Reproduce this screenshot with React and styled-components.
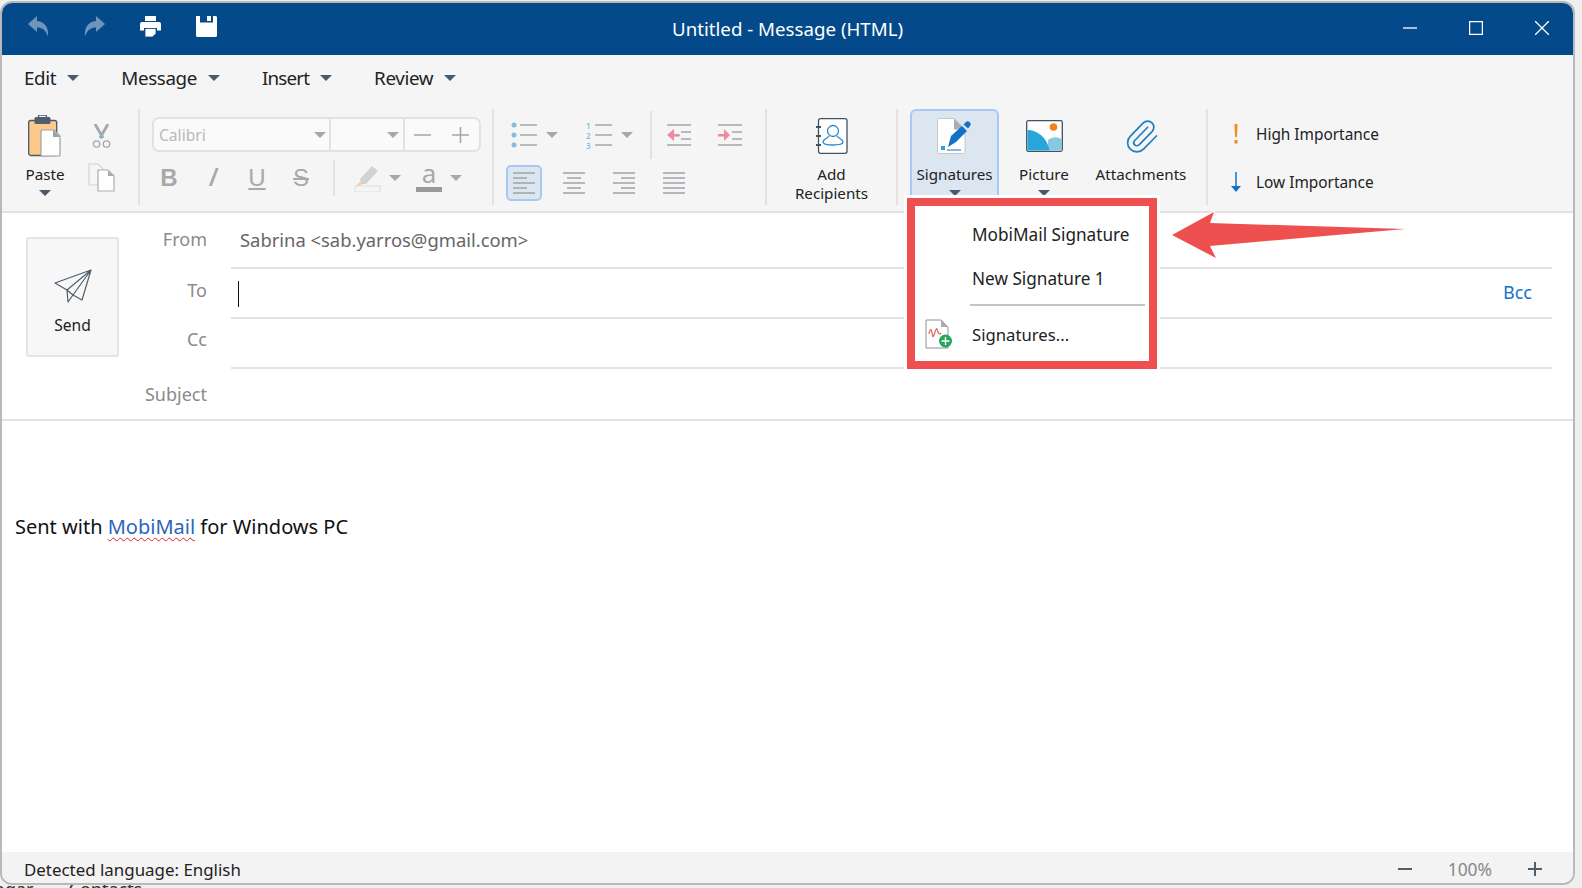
import React from 'react';
import styled, { createGlobalStyle } from 'styled-components';
import { Paperclip } from 'lucide-react';

const GlobalStyle = createGlobalStyle`
	html, body {
		margin: 0;
		padding: 0;
		height: 100%;
		background: #efefef;
		overflow: hidden;
	}
	body {
		font-family: 'Noto Sans', 'Open Sans', sans-serif;
		color: #1c1c1c;
	}
`;

const Page = styled.div`
	width: 1582px;
	height: 888px;
	padding: 3px 9px 0 2px;
	box-sizing: border-box;
	display: flex;
	flex-direction: column;
`;

const Window = styled.div`
	position: relative;
	height: 880px;
	flex: none;
	display: flex;
	flex-direction: column;
	background: #fff;
	border-radius: 10px;
	box-shadow: 0 0 0 2px #b9b9b9;
`;

const TitleBar = styled.header`
	height: 52px;
	flex: none;
	display: flex;
	align-items: center;
	background: #044a8a;
	border-radius: 10px 10px 0 0;
	position: relative;
`;

const QuickActions = styled.div`
	display: flex;
	padding-left: 26px;
	gap: 35px;
	margin-top: -5px;
	flex: 1;
`;

const QuickIcon = styled.svg`
	width: 21px;
	height: 21px;
	display: block;
`;

const Title = styled.h1`
	margin: 0;
	font-size: 18.7px;
	font-weight: 400;
	color: #fff;
	white-space: nowrap;
	position: absolute;
	left: 670px;
	top: 13px;
`;

const WindowControls = styled.div`
	display: flex;
	padding-right: 24px;
	gap: 52px;
	margin-top: -3px;
`;

const ControlIcon = styled.svg`
	width: 14px;
	height: 14px;
	display: block;
	stroke: #fff;
	fill: none;
`;

const MenuBar = styled.nav`
	height: 45px;
	flex: none;
	display: flex;
	align-items: center;
	gap: 42px;
	padding-left: 22px;
	background: #f5f5f5;
`;

const MenuItem = styled.div`
	display: flex;
	align-items: center;
	gap: 11px;
	font-size: 18.8px;
	letter-spacing: ${(p) => p.$spacing}px;
	line-height: 24px;
	color: #222;
`;

const Caret = styled.span`
	display: block;
	flex: none;
	width: 0;
	height: 0;
	border-left: 6px solid transparent;
	border-right: 6px solid transparent;
	border-top: 6px solid ${(p) => p.$color || '#4a5a6a'};
`;

const Ribbon = styled.div`
	height: 111px;
	flex: none;
	box-sizing: border-box;
	padding-top: 9px;
	display: flex;
	align-items: flex-start;
	background: #f5f5f5;
`;

const Sep = styled.div`
	width: 2px;
	height: 96px;
	flex: none;
	background: #e2e2e2;
`;

const RibbonRule = styled.div`
	height: 2px;
	flex: none;
	background: #e2e2e2;
`;

const ClipboardGroup = styled.div`
	width: 136px;
	flex: none;
	display: flex;
`;

const PasteButton = styled.div`
	width: 86px;
	display: flex;
	flex-direction: column;
	align-items: center;
	padding-top: 6px;
	box-sizing: border-box;
`;

const ClipTools = styled.div`
	width: 28px;
	display: flex;
	flex-direction: column;
	align-items: center;
	padding-top: 15px;
	gap: 15px;
	margin-left: -1px;
`;

const Label = styled.div`
	font-size: 15.2px;
	line-height: 19px;
	color: #222;
	text-align: center;
	white-space: nowrap;
`;

const PasteLabel = styled(Label)`
	margin-top: 8px;
`;

const FormatGroup = styled.div`
	width: 352px;
	flex: none;
	display: flex;
	flex-direction: column;
	padding-top: 8px;
	gap: 8px;
`;

const FontBox = styled.div`
	width: 329px;
	height: 35px;
	margin-left: 12px;
	box-sizing: border-box;
	display: flex;
	align-items: center;
	border: 2px solid #e2e2e2;
	border-radius: 7px;
	background: #fafafa;
`;

const FontCell = styled.div`
	width: ${(p) => p.$w}px;
	height: 100%;
	flex: none;
	box-sizing: border-box;
	display: flex;
	align-items: center;
	justify-content: space-between;
	padding: 0 ${(p) => p.$pr || 0}px 0 ${(p) => p.$pl || 0}px;
	border-right: ${(p) => (p.$last ? 'none' : '2px solid #e2e2e2')};
	font-size: 15.6px;
	color: #b9b9b9;
`;

const FormatRow = styled.div`
	height: 36px;
	display: flex;
	align-items: center;
	padding-left: 7px;
`;

const Slot = styled.div`
	width: ${(p) => p.$w}px;
	height: 36px;
	flex: none;
	display: flex;
	align-items: center;
	justify-content: center;
	gap: ${(p) => p.$gap || 0}px;
`;

const Glyph = styled.span`
	font-family: 'Liberation Sans', sans-serif;
	font-size: ${(p) => p.$size || 24}px;
	font-weight: ${(p) => p.$weight || 400};
	font-style: ${(p) => (p.$italic ? 'italic' : 'normal')};
	text-decoration: ${(p) => p.$deco || 'none'};
	text-decoration-thickness: 2px;
	text-underline-offset: 2px;
	color: #a6a9ac;
	line-height: 24px;
`;

const SmallSep = styled.div`
	width: 2px;
	height: ${(p) => p.$h || 36}px;
	flex: none;
	background: #e2e2e2;
	margin: 0 ${(p) => p.$right || 0}px 0 ${(p) => p.$left || 0}px;
`;

const ListGroup = styled.div`
	width: 271px;
	flex: none;
	display: flex;
	flex-direction: column;
	padding-top: 2px;
	gap: 6px;
`;

const ListRow = styled.div`
	height: 48px;
	display: flex;
	align-items: center;
`;

const AlignRow = styled.div`
	height: 36px;
	display: flex;
	align-items: center;
	padding-left: 12px;
`;

const AlignButton = styled.div`
	width: 36px;
	height: 36px;
	box-sizing: border-box;
	display: flex;
	align-items: center;
	justify-content: center;
	flex: none;
	margin-right: ${(p) => p.$mr || 0}px;
	border-radius: 5px;
	border: 2px solid ${(p) => (p.$active ? '#a9c9f5' : 'transparent')};
	background: ${(p) => (p.$active ? '#dce6f0' : 'transparent')};
`;

const ToolButton = styled.div`
	width: ${(p) => p.$w}px;
	height: 87px;
	flex: none;
	box-sizing: border-box;
	padding-top: 7px;
	display: flex;
	flex-direction: column;
	align-items: center;
	border-radius: 6px 6px 0 0;
	border: 2px solid ${(p) => (p.$active ? '#a9c9f5' : 'transparent')};
	border-bottom: none;
	background: ${(p) => (p.$active ? '#dce6f0' : 'transparent')};
`;

const IconBox = styled.div`
	height: 36px;
	margin-bottom: 11px;
	display: flex;
	align-items: center;
	justify-content: center;
	flex: none;
`;

const ToolCaret = styled(Caret)`
	margin-top: 6px;
`;

const MediaGroup = styled.div`
	width: 308px;
	flex: none;
	display: flex;
	padding-left: 12px;
	box-sizing: border-box;
`;

const ImportanceGroup = styled.div`
	display: flex;
	flex-direction: column;
	padding: 1px 0 0 20px;
`;

const ImportanceRow = styled.div`
	height: 48px;
	display: flex;
	align-items: center;
	gap: 12px;
	font-size: 15.4px;
	color: #222;
`;

const ImportanceIcon = styled.svg`
	width: 16px;
	height: 22px;
	flex: none;
`;

const ComposeHead = styled.section`
	height: 208px;
	flex: none;
	display: flex;
	box-sizing: border-box;
	border-bottom: 2px solid #e2e2e2;
`;

const SendColumn = styled.div`
	width: 118px;
	flex: none;
	padding: 24px 0 0 24px;
	box-sizing: border-box;
`;

const SendButton = styled.button`
	width: 93px;
	height: 120px;
	box-sizing: border-box;
	display: flex;
	flex-direction: column;
	align-items: center;
	padding: 30px 0 0;
	gap: 12px;
	font-family: inherit;
	font-size: 15.6px;
	line-height: 20px;
	color: #222;
	background: #f7f7f7;
	border: 2px solid #e4e4e4;
	border-radius: 3px;
`;

const Fields = styled.div`
	flex: 1;
	padding: 6px 21px 0 0;
	display: flex;
	flex-direction: column;
`;

const FieldRow = styled.div`
	height: 50px;
	display: grid;
	grid-template-columns: 87px 1fr;
	column-gap: 24px;
	flex: none;
`;

const FieldLabel = styled.div`
	text-align: right;
	font-size: 18px;
	line-height: 24px;
	color: #8a8a8a;
	padding-top: ${(p) => p.$pt || 8}px;
`;

const FieldValue = styled.div`
	display: flex;
	align-items: center;
	justify-content: space-between;
	padding: 0 20px 8px 9px;
	border-bottom: ${(p) => (p.$plain ? 'none' : '2px solid #e2e2e2')};
	font-size: 18.4px;
	color: #666;
`;

const TextCaret = styled.span`
	display: block;
	width: 1px;
	height: 26px;
	background: #111;
	margin: 9px 0 0 -2px;
`;

const BccLink = styled.span`
	font-size: 18px;
	color: #1273c4;
	margin-top: 6px;
`;

const Body = styled.main`
	flex: 1;
	padding: 94px 13px 0;
	font-size: 20px;
	line-height: 24px;
	color: #111;
`;

const MobiLink = styled.span`
	color: #2a66bd;
	text-decoration: underline wavy #e3202c 1px;
	text-underline-offset: 3px;
`;

const StatusBar = styled.footer`
	height: 31px;
	flex: none;
	box-sizing: border-box;
	display: flex;
	align-items: center;
	justify-content: space-between;
	padding: 3px 31px 0 22px;
	background: #f3f3f3;
	border-radius: 0 0 10px 10px;
	font-size: 16.9px;
	color: #222;
`;

const Zoom = styled.div`
	display: flex;
	align-items: center;
	gap: 36px;
	font-size: 17.4px;
	color: #888;
`;

const ZoomSign = styled.svg`
	width: 14px;
	height: 14px;
	stroke: #4f5f70;
	stroke-width: 2;
`;

const Dropdown = styled.div`
	position: absolute;
	left: 905px;
	top: 195px;
	width: 250px;
	box-sizing: border-box;
	background: #fff;
	border: 8px solid #ee5050;
	box-shadow: 0 0 0 3px #fff;
	padding: 6px 0 3px;
`;

const DropItem = styled.div`
	height: ${(p) => p.$h || 44}px;
	display: flex;
	align-items: center;
	font-size: ${(p) => p.$size || 17.2}px;
	color: #222;
	padding-left: ${(p) => p.$pl || 57}px;
`;

const DropRule = styled.div`
	height: 2px;
	margin: 4px 4px 4px 55px;
	background: #c4c4c4;
`;

const DropIcon = styled.svg`
	width: 28px;
	height: 30px;
	margin-right: 19px;
	flex: none;
`;

const PointerArrow = styled.svg`
	position: absolute;
	left: 1169px;
	top: 207px;
	width: 238px;
	height: 54px;
	overflow: visible;
`;

const BehindStrip = styled.div`
	height: 5px;
	overflow: hidden;
	display: flex;
	gap: 35px;
	font-size: 18px;
	line-height: 12px;
	color: #333;
	margin-left: -8px;
	flex: none;
`;

const PaperClipIcon = styled(Paperclip)`
	width: 37px;
	height: 37px;
	color: #1e7fc4;
	display: block;
`;

const menus = [
	{ name: 'Edit', spacing: -0.35 },
	{ name: 'Message', spacing: -0.35 },
	{ name: 'Insert', spacing: -0.85 },
	{ name: 'Review', spacing: -0.35 },
];

const Line = ({ d, color = '#a3a7ab', w = 1.5 }) => <path d={d} stroke={color} strokeWidth={w} fill='none' />;

const AlignIcon = ({ rows }) => (
	<svg width='24' height='24' viewBox='0 0 24 24'>
		{rows.map((r, i) => (
			<Line key={i} d={`M${r[0]} ${2 + i * 5}H${r[1]}`} color='#9ea3a8' />
		))}
	</svg>
);

function App() {
	return (
		<Page>
			<GlobalStyle />
			<Window>
				<TitleBar>
					<QuickActions>
						<QuickIcon viewBox='0 0 21 21' fill='#6e94bb'>
							<path d='M9 0 0 8 9 16v-4.600c5 0 8.500 2 11 9 1-8-3-15-11-15.400z' />
						</QuickIcon>
						<QuickIcon viewBox='0 0 21 21' fill='#6e94bb'>
							<path d='M12 0l9 8-9 8v-4.600c-5 0-8.500 2-11 9-1-8 3-15 11-15.400z' />
						</QuickIcon>
						<QuickIcon viewBox='0 0 21 21'>
							<path fill='#fff' d='M5 0h11v5H5zM2 6h17a2 2 0 0 1 2 2v6.500h-4V12H4v2.500H0V8a2 2 0 0 1 2-2z' />
							<path fill='#fff' stroke='#044a8a' strokeWidth='.8' d='M5 12.500h11v5l-3.500 3.500H5z' />
						</QuickIcon>
						<QuickIcon viewBox='0 0 21 21' fill='#fff'>
							<path fillRule='evenodd' d='M0 0h4v6.500h13V0h3l1 1v19l-1 1H1l-1-1zM11 0h4v5h-4z' />
						</QuickIcon>
					</QuickActions>
					<Title>Untitled - Message (HTML)</Title>
					<WindowControls>
						<ControlIcon viewBox='0 0 14 14'>
							<path d='M0 7h14' strokeWidth='1.3' />
						</ControlIcon>
						<ControlIcon viewBox='0 0 14 14'>
							<rect x='.6' y='.6' width='12.800' height='12.800' strokeWidth='1.3' />
						</ControlIcon>
						<ControlIcon viewBox='0 0 14 14'>
							<path d='M0 0l14 14M14 0L0 14' strokeWidth='1.3' />
						</ControlIcon>
					</WindowControls>
				</TitleBar>

				<MenuBar>
					{menus.map((m) => (
						<MenuItem key={m.name} $spacing={m.spacing}>
							{m.name}
							<Caret />
						</MenuItem>
					))}
				</MenuBar>

				<Ribbon>
					<ClipboardGroup>
						<PasteButton>
							<svg width='34' height='42' viewBox='0 0 34 42'>
								<rect x='.7' y='5.500' width='28' height='35' rx='2' fill='#fcc98a' stroke='#4a5a6a' strokeWidth='1.300' />
								<rect x='6.500' y='2' width='16' height='7' rx='1.500' fill='#4f5f70' />
								<rect x='10.500' y='0' width='8' height='5' rx='1.500' fill='none' stroke='#4f5f70' strokeWidth='1.300' />
								<path d='M14 15h12l6 6v19a1 1 0 0 1-1 1H14a1 1 0 0 1-1-1V16a1 1 0 0 1 1-1z' fill='#fff' stroke='#9ba0a5' strokeWidth='1.200' />
								<path d='M25 15l7 7h-7z' fill='#9ba0a5' />
							</svg>
							<PasteLabel>Paste</PasteLabel>
							<ToolCaret />
						</PasteButton>
						<ClipTools>
							<svg width='19' height='24' viewBox='0 0 19 24'>
								<path d='M3 0l8 14M16 0 8 14' stroke='#a3a7ab' strokeWidth='2.800' fill='none' />
								<circle cx='9.500' cy='11' r='1.800' fill='#7fb7d8' />
								<circle cx='4.500' cy='20' r='3.200' fill='none' stroke='#a3a7ab' strokeWidth='1.300' />
								<circle cx='14.500' cy='20' r='3.200' fill='none' stroke='#a3a7ab' strokeWidth='1.300' />
							</svg>
							<svg width='27' height='29' viewBox='0 0 27 29'>
								<path d='M1 1h9l5 5v16H1z' fill='#f5f5f5' stroke='#d2d4d6' strokeWidth='1.200' />
								<path d='M10 7h10l6 6v15H10z' fill='#fff' stroke='#a9adb1' strokeWidth='1.200' />
								<path d='M20 7l6 6h-6z' fill='#a9adb1' />
							</svg>
						</ClipTools>
					</ClipboardGroup>
					<Sep />

					<FormatGroup>
						<FontBox>
							<FontCell $w={177} $pl={5} $pr={3}>
								Calibri
								<Caret $color='#a6a9ac' />
							</FontCell>
							<FontCell $w={74} $pl={56} $pr={3}>
								<Caret $color='#a6a9ac' />
							</FontCell>
							<FontCell $w={74} $pl={9} $pr={9} $last>
								<svg width='56' height='16' viewBox='0 0 56 16'>
									<Line d='M0 8h17M38 8h17M46.500 0v16' w={1.600} color='#a3a7ab' />
								</svg>
							</FontCell>
						</FontBox>
						<FormatRow>
							<Slot $w={44}>
								<Glyph $weight={700}>B</Glyph>
							</Slot>
							<Slot $w={44}>
								<Glyph $italic $weight={700}>/</Glyph>
							</Slot>
							<Slot $w={44}>
								<Glyph $deco='underline'>U</Glyph>
							</Slot>
							<Slot $w={44}>
								<Glyph $deco='line-through'>S</Glyph>
							</Slot>
							<SmallSep $left={10} $right={16} />
							<Slot $w={52} $gap={7}>
								<svg width='28' height='28' viewBox='0 0 28 28'>
									<path d='M6 15 18 2l6 5-12 13H7z' fill='#d0d2d4' />
									<path d='M2 22l4-4 2 3z' fill='#fcc98a' />
									<rect x='1' y='22' width='25' height='6' fill='#f5f5f5' stroke='#dedede' />
								</svg>
								<Caret $color='#a6a9ac' />
							</Slot>
							<Slot $w={72} $gap={8}>
								<svg width='26' height='30' viewBox='0 0 26 30'>
									<text x='13' y='20' textAnchor='middle' fontFamily='Noto Sans' fontSize='26' fill='#a6a9ac'>a</text>
									<rect x='0' y='24' width='26' height='5' fill='#999' />
								</svg>
								<Caret $color='#a6a9ac' />
							</Slot>
						</FormatRow>
					</FormatGroup>
					<Sep />

					<ListGroup>
						<ListRow>
							<Slot $w={80} $gap={9}>
								<svg width='26' height='26' viewBox='0 0 26 26'>
									{[3, 13, 23].map((y) => (
										<g key={y}>
											<circle cx='3' cy={y} r='2.500' fill='#86bce0' />
											<Line d={`M9 ${y}H26`} />
										</g>
									))}
								</svg>
								<Caret $color='#a6a9ac' />
							</Slot>
							<Slot $w={70} $gap={9}>
								<svg width='26' height='28' viewBox='0 0 26 28'>
									{['1', '2', '3'].map((n, i) => (
										<g key={n}>
											<text x='0' y={8 + i * 10} fontFamily='Noto Sans' fontSize='8' fontWeight='600' fill='#86bce0'>{n}</text>
											<Line d={`M9 ${4 + i * 10}H26`} />
										</g>
									))}
								</svg>
								<Caret $color='#a6a9ac' />
							</Slot>
							<SmallSep $h={48} $left={6} />
							<Slot $w={54}>
								<svg width='24' height='22' viewBox='0 0 24 22'>
									<Line d='M0 1h24M14 8h10M14 15h10M0 21h24M13 11.500H5' />
									<path d='M0 11l7-6v12z' fill='#f08aa0' />
									<rect x='5' y='10' width='7' height='2.500' fill='#f08aa0' />
								</svg>
							</Slot>
							<Slot $w={48}>
								<svg width='24' height='22' viewBox='0 0 24 22'>
									<Line d='M0 1h24M14 8h10M14 15h10M0 21h24' />
									<path d='M12 11 6 5v12z' fill='#f08aa0' />
									<rect x='0' y='10' width='7' height='2.500' fill='#f08aa0' />
								</svg>
							</Slot>
						</ListRow>
						<AlignRow>
							<AlignButton $active $mr={14}>
								<AlignIcon rows={[[1, 23], [1, 15], [1, 23], [1, 15], [1, 23]]} />
							</AlignButton>
							<AlignButton $mr={14}>
								<AlignIcon rows={[[1, 23], [5, 19], [1, 23], [5, 19], [1, 23]]} />
							</AlignButton>
							<AlignButton $mr={14}>
								<AlignIcon rows={[[1, 23], [9, 23], [1, 23], [9, 23], [1, 23]]} />
							</AlignButton>
							<AlignButton>
								<AlignIcon rows={[[1, 23], [1, 23], [1, 23], [1, 23], [1, 23]]} />
							</AlignButton>
						</AlignRow>
					</ListGroup>
					<Sep />

					<ToolButton $w={129}>
						<IconBox>
							<svg width='32' height='36' viewBox='0 0 32 36'>
								<rect x='2.500' y='.7' width='28.500' height='34.600' rx='2' fill='#fff' stroke='#43525f' strokeWidth='1.300' />
								<path d='M0 9h5M0 18h5M0 27h5' stroke='#43525f' strokeWidth='2' />
								<circle cx='17' cy='13' r='5.500' fill='none' stroke='#2a86c8' strokeWidth='1.300' />
								<path d='M13 18c-2 3-6 3-6 6 0 2 3 3 10 3s10-1 10-3c0-3-4-3-6-6' fill='none' stroke='#2a86c8' strokeWidth='1.300' />
							</svg>
						</IconBox>
						<Label>
							Add
							<br />
							Recipients
						</Label>
					</ToolButton>
					<Sep />

					<MediaGroup>
						<ToolButton $w={89} $active>
							<IconBox>
								<svg width='36' height='36' viewBox='0 0 36 36'>
									<path d='M2 .5h15l11 11V34a1.500 1.500 0 0 1-1.500 1.500H2A1.500 1.500 0 0 1 .5 34V2A1.500 1.500 0 0 1 2 .5z' fill='#fff' stroke='#c4c8cc' />
									<path d='M17 .5l11 11H17z' fill='#a9adb1' />
									<path d='M14 18 25 8l5 5-11 11-8 5z' fill='#1173c6' />
									<path d='M26.500 6.500l2.500-2.500a2.500 2.500 0 0 1 3.500 0l.5.5a2.500 2.500 0 0 1 0 3.500L31 10.500z' fill='#1173c6' />
									<rect x='4' y='28' width='4' height='4' fill='#29a6d9' />
									<path d='M10 32h14' stroke='#1173c6' />
								</svg>
							</IconBox>
							<Label>Signatures</Label>
							<ToolCaret />
						</ToolButton>
						<ToolButton $w={90}>
							<IconBox>
								<svg width='37' height='32' viewBox='0 0 37 32'>
									<rect x='.7' y='.7' width='35.600' height='30.600' rx='1.500' fill='#fff' stroke='#43525f' strokeWidth='1.300' />
									<path d='M22 30.500h14V20c-4-4-10-3-14 0z' fill='#88c7e0' />
									<path d='M1.500 10c10 0 20 8 22 20.500h-22z' fill='#29a6d9' />
									<circle cx='27.500' cy='7' r='3.800' fill='#f58220' />
								</svg>
							</IconBox>
							<Label>Picture</Label>
							<ToolCaret />
						</ToolButton>
						<ToolButton $w={104}>
							<IconBox>
								<PaperClipIcon strokeWidth={1.100} />
							</IconBox>
							<Label>Attachments</Label>
						</ToolButton>
					</MediaGroup>
					<Sep />

					<ImportanceGroup>
						<ImportanceRow>
							<ImportanceIcon viewBox='0 0 16 22'>
								<path d='M6.500 1h3L9 14H7zM6.500 17h3v3.500h-3z' fill='#f58a1f' />
							</ImportanceIcon>
							High Importance
						</ImportanceRow>
						<ImportanceRow>
							<ImportanceIcon viewBox='0 0 16 22'>
								<path d='M8 1v18' stroke='#1273c4' strokeWidth='1.500' />
								<path d='M3 15h10l-5 6z' fill='#1273c4' />
							</ImportanceIcon>
							Low Importance
						</ImportanceRow>
					</ImportanceGroup>
				</Ribbon>
				<RibbonRule />

				<ComposeHead>
					<SendColumn>
						<SendButton>
							<svg width='38' height='34' viewBox='4 4 38 34'>
								<path d='M41 5 5 18l12 7 1 12 5-7 9 5zM41 5 17 25M41 5 23 30M18 37l-1-12 6 5' fill='none' stroke='#4f5f70' strokeWidth='1.200' strokeLinejoin='round' />
							</svg>
							Send
						</SendButton>
					</SendColumn>
					<Fields>
						<FieldRow>
							<FieldLabel>From</FieldLabel>
							<FieldValue>Sabrina &lt;sab.yarros@gmail.com&gt;</FieldValue>
						</FieldRow>
						<FieldRow>
							<FieldLabel $pt={9}>To</FieldLabel>
							<FieldValue>
								<TextCaret />
								<BccLink>Bcc</BccLink>
							</FieldValue>
						</FieldRow>
						<FieldRow>
							<FieldLabel>Cc</FieldLabel>
							<FieldValue />
						</FieldRow>
						<FieldRow>
							<FieldLabel $pt={13}>Subject</FieldLabel>
							<FieldValue $plain />
						</FieldRow>
					</Fields>
				</ComposeHead>

				<Body>
					Sent with <MobiLink>MobiMail</MobiLink> for Windows PC
				</Body>

				<StatusBar>
					<span>Detected language: English</span>
					<Zoom>
						<ZoomSign viewBox='0 0 14 14'>
							<path d='M0 7h14' />
						</ZoomSign>
						<span>100%</span>
						<ZoomSign viewBox='0 0 14 14'>
							<path d='M0 7h14M7 0v14' />
						</ZoomSign>
					</Zoom>
				</StatusBar>

				<Dropdown>
					<DropItem>MobiMail Signature</DropItem>
					<DropItem>New Signature 1</DropItem>
					<DropRule />
					<DropItem $h={48} $pl={10} $size={16.7}>
						<DropIcon viewBox='0 0 28 30'>
							<path d='M1 1h15l7 7v21H1z' fill='#fff' stroke='#8c9196' />
							<path d='M16 1l7 7h-7z' fill='#a9adb1' />
							<path d='M4 15c1-5 2-6 3-1s1 5 3-1 2-3 3 0 2 2 3 1' fill='none' stroke='#e0605c' strokeWidth='1.200' />
							<circle cx='20.500' cy='22' r='6.500' fill='#27a75c' />
							<path d='M20.500 18v8M16.500 22h8' stroke='#fff' strokeWidth='1.400' />
						</DropIcon>
						Signatures...
					</DropItem>
				</Dropdown>

				<PointerArrow viewBox='0 0 238 54'>
					<path
						d='M1 25 43 2 39 13 234 19 39 36 45 48z'
						fill='#ee5050'
						stroke='#fff'
						strokeWidth='2'
						paintOrder='stroke'
						strokeLinejoin='round'
					/>
				</PointerArrow>
			</Window>
			<BehindStrip>
				<span>ogar</span>
				<span>Contacts</span>
			</BehindStrip>
		</Page>
	);
}

export default App;
